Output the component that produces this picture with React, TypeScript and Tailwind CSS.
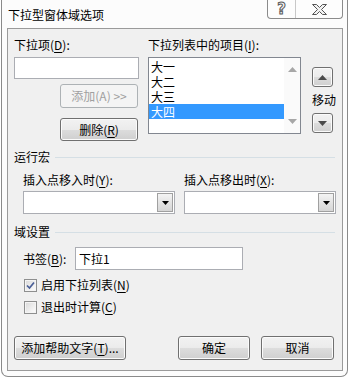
import type { ReactNode } from 'react'

const FONT = "font-['Noto_Sans_CJK_SC','Noto_Sans',sans-serif]"
const BTN =
  'flex items-center justify-center rounded-[3px] border border-[#707070] bg-[linear-gradient(#f2f2f2,#ebebeb_50%,#dddddd_50%,#cfcfcf)] shadow-[inset_0_0_0_1px_#fbfbfb] text-[12px] leading-[16px] text-black'

function U({ children }: { children: ReactNode }) {
  return <span className="underline underline-offset-[2px]">{children}</span>
}

function Tri({ down, color = '#3a3a3a' }: { down?: boolean; color?: string }) {
  return (
    <svg width="9" height="5" viewBox="0 0 9 5">
      <path d={down ? 'M0 0H9L4.5 5Z' : 'M0 5H9L4.5 0Z'} fill={color} />
    </svg>
  )
}

function GroupTitle({ label }: { label: string }) {
  return (
    <div className="flex h-[16px] items-center">
      <span className="text-[12px] leading-[16px]">{label}</span>
      <div className="ml-[5px] mr-[7px] h-px flex-1 bg-[#d5dfe5]" />
    </div>
  )
}

function Combo() {
  return (
    <div className="mt-[3px] flex h-[23px] w-[152px] border border-[#abadb3] bg-white">
      <div className="flex-1" />
      <div className="m-[1px] flex w-[16px] items-center justify-center border border-[#a0a0a0] bg-[linear-gradient(#f4f4f4,#e4e4e4_50%,#d6d6d6)]">
        <svg width="7" height="4" viewBox="0 0 7 4">
          <path d="M0 0H7L3.5 4Z" fill="#000" />
        </svg>
      </div>
    </div>
  )
}

function Check({ checked, label }: { checked?: boolean; label: ReactNode }) {
  return (
    <div className="flex h-[16px] items-center pl-[10px]">
      <div className="flex h-[13px] w-[13px] items-center justify-center border border-[#8e8f8f] bg-[#f4f4f4]">
        <div className="flex h-[9px] w-[9px] items-center justify-center bg-[linear-gradient(135deg,#dcdcdc,#fbfbfb)]">
          {checked && (
            <svg width="9" height="9" viewBox="0 0 9 9">
              <path d="M1 4.5 L3.5 7 L8 1.5" stroke="#4a5f97" strokeWidth="1.7" fill="none" />
            </svg>
          )}
        </div>
      </div>
      <span className="ml-[4px] text-[12px] leading-[16px]">{label}</span>
    </div>
  )
}

export default function App() {
  const items = ['大一', '大二', '大三', '大四']

  return (
    <div className={`relative h-[378px] w-[350px] overflow-hidden bg-white text-black ${FONT}`}>
      <div className="ml-[1px] flex h-[377px] w-[347px] flex-col rounded-b-[7px] border-x border-b border-[#8a8a8a] bg-[#fcfcfc] px-[5px]">
        {/* title bar */}
        <div className="flex h-[28px]">
          <span className="ml-[1px] mt-[7px] text-[12px] leading-[16px]">下拉型窗体域选项</span>
          <div className="ml-auto mr-[-1px] flex h-[19px] w-[76px] rounded-b-[4px] border-x border-b border-[#8b8b8b] bg-[#fdfdfd]">
            <div className="flex w-[28px] items-center justify-center border-r border-[#c8c8c8]">
              <span className="text-[15px] font-bold leading-[17px] text-[#f6f6f6] [-webkit-text-stroke:1px_#5a5a5a] font-['DejaVu_Sans',sans-serif]">
                ?
              </span>
            </div>
            <div className="flex flex-1 items-center justify-center">
              <svg width="15" height="11" viewBox="0 0 15 11">
                <path
                  d="M0.5 0.5H4.5L7.5 3.5L10.5 0.5H14.5L9.5 5.5L14.5 10.5H10.5L7.5 7.5L4.5 10.5H0.5L5.5 5.5Z"
                  fill="#f2f2f2"
                  stroke="#555"
                  strokeWidth="1"
                  strokeLinejoin="round"
                />
              </svg>
            </div>
          </div>
        </div>

        {/* client area */}
        <div className="flex h-[343px] w-[336px] flex-col border border-[#9a9a9a] bg-[#f0f0f0] pl-[6px] pt-[8px]">
          <div className="flex">
            <div className="flex w-[125px] flex-col">
              <span className="h-[16px] text-[12px] leading-[16px]">
                下拉项(<U>D</U>):
              </span>
              <div className="mt-[4px] h-[22px] border border-[#abadb3] bg-white" />
              <div className="ml-[46px] mt-[5px] flex h-[24px] w-[78px] items-center justify-center rounded-[3px] border border-[#adb2b5] bg-[#f4f4f4] text-[12px] text-[#a0a0a0]">
                添加(A) &gt;&gt;
              </div>
              <div className={`ml-[46px] mt-[10px] h-[23px] w-[78px] ${BTN}`}>
                删除(<U>R</U>)
              </div>
            </div>

            <div className="ml-[9px] flex w-[153px] flex-col">
              <span className="h-[16px] text-[12px] leading-[16px]">
                下拉列表中的项目(<U>I</U>):
              </span>
              <div className="mt-[4px] flex h-[77px] border border-[#828790] bg-white">
                <div className="flex-1 pt-[1px]">
                  {items.map((it, i) => (
                    <div
                      key={it}
                      className={`h-[15px] pl-[2px] text-[12px] leading-[15px] ${
                        i === 3 ? 'bg-[#3399ff] text-white' : 'text-black'
                      }`}
                    >
                      {it}
                    </div>
                  ))}
                </div>
                <div className="flex w-[16px] flex-col items-center justify-between bg-[#fafafa] py-[9px]">
                  <Tri color="#a7a7a7" />
                  <Tri down color="#a7a7a7" />
                </div>
              </div>
            </div>

            <div className="ml-[11px] mt-[30px] flex w-[24px] flex-col">
              <div className={`h-[20px] w-[21px] ${BTN}`}>
                <Tri color="#4a4a4a" />
              </div>
              <span className="mt-[5px] h-[16px] text-[12px] leading-[16px]">移动</span>
              <div className={`mt-[5px] h-[20px] w-[21px] ${BTN}`}>
                <Tri down color="#4a4a4a" />
              </div>
            </div>
          </div>

          <div className="mt-[8px]">
            <GroupTitle label="运行宏" />
          </div>
          <div className="mt-[7px] flex pl-[9px]">
            <div className="flex w-[152px] flex-col">
              <span className="h-[16px] text-[12px] leading-[16px]">
                插入点移入时(<U>Y</U>):
              </span>
              <Combo />
            </div>
            <div className="ml-[9px] flex w-[152px] flex-col">
              <span className="h-[16px] text-[12px] leading-[16px]">
                插入点移出时(<U>X</U>):
              </span>
              <Combo />
            </div>
          </div>

          <div className="mt-[10px]">
            <GroupTitle label="域设置" />
          </div>
          <div className="mt-[7px] flex h-[23px] items-center pl-[9px]">
            <span className="w-[52px] text-[12px] leading-[16px]">
              书签(<U>B</U>):
            </span>
            <div className="flex h-[23px] w-[168px] items-center border border-[#abadb3] bg-white pl-[3px] text-[12px]">
              下拉1
            </div>
          </div>
          <div className="mt-[7px]">
            <Check
              checked
              label={
                <>
                  启用下拉列表(<U>N</U>)
                </>
              }
            />
          </div>
          <div className="mt-[6px]">
            <Check
              label={
                <>
                  退出时计算(<U>C</U>)
                </>
              }
            />
          </div>

          <div className="mt-[21px] flex">
            <div className={`h-[24px] w-[112px] ${BTN}`}>
              添加帮助文字(<U>T</U>)...
            </div>
            <div
              className={`ml-[52px] h-[24px] w-[72px] ${BTN} border-[#3c7fb1] shadow-[inset_0_0_0_1px_#48d7fc]`}
            >
              确定
            </div>
            <div className={`ml-[11px] h-[24px] w-[73px] ${BTN}`}>取消</div>
          </div>
        </div>
      </div>
    </div>
  )
}
